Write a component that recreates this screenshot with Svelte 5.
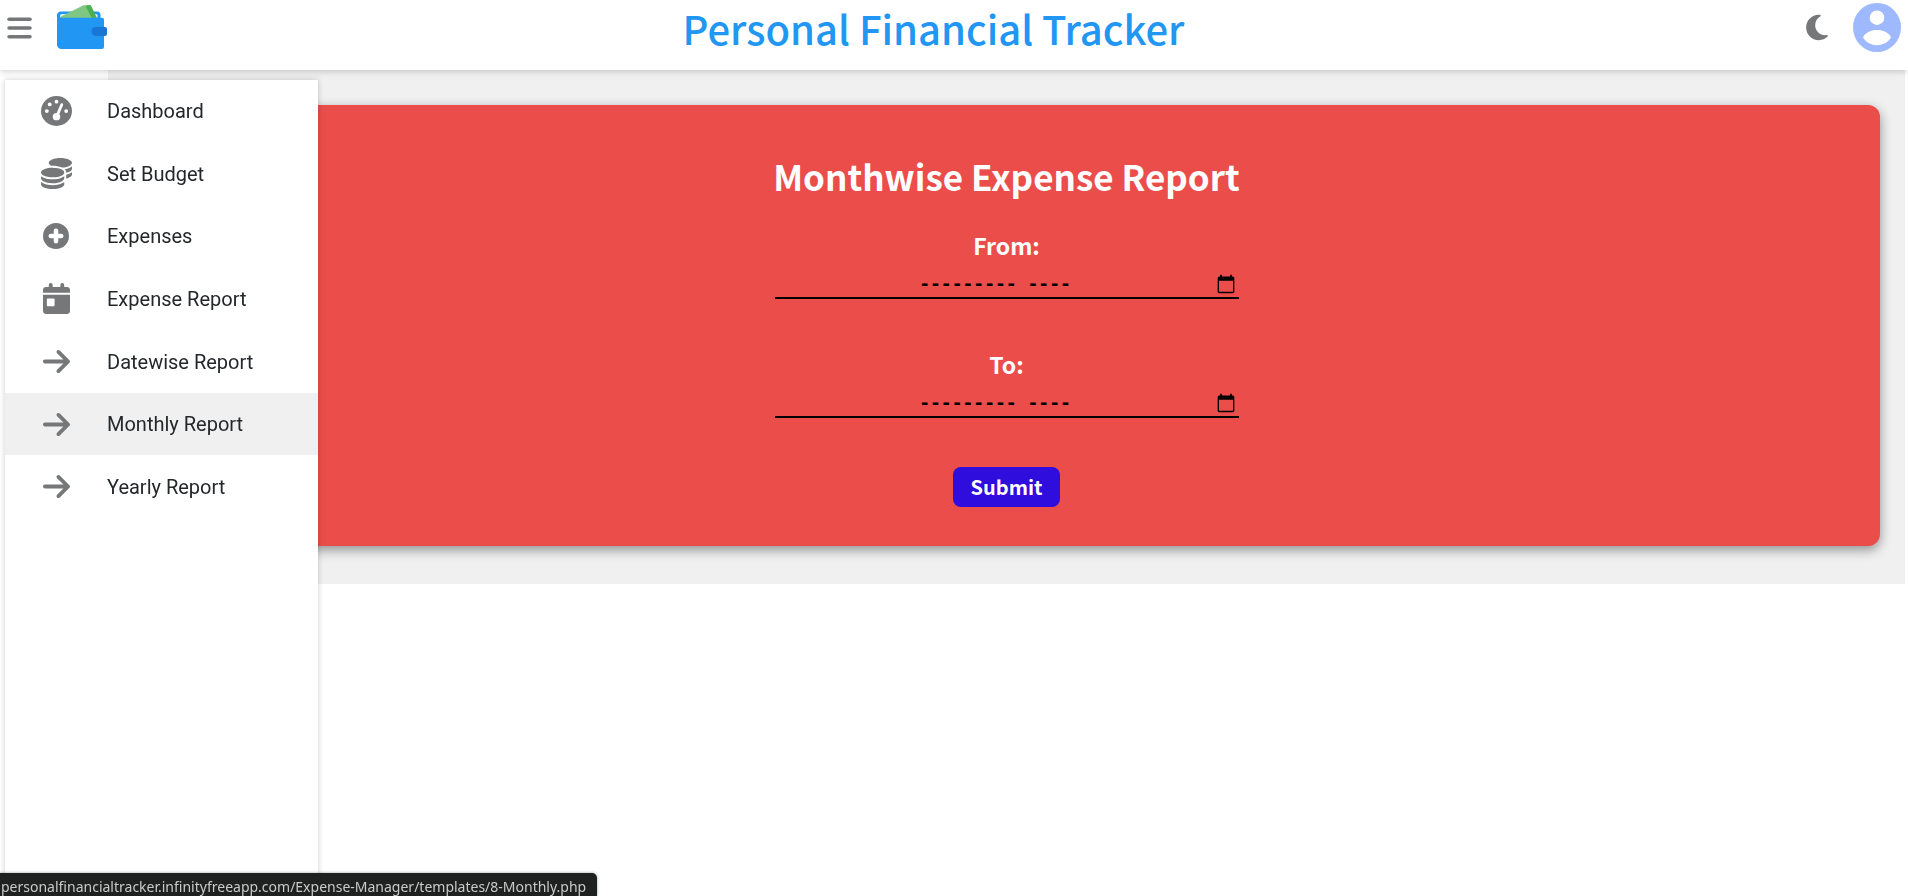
<script>
  const items = [
    { label: 'Dashboard', icon: 'gauge' },
    { label: 'Set Budget', icon: 'coins' },
    { label: 'Expenses', icon: 'plus' },
    { label: 'Expense Report', icon: 'calendar' },
    { label: 'Datewise Report', icon: 'arrow' },
    { label: 'Monthly Report', icon: 'arrow', active: true },
    { label: 'Yearly Report', icon: 'arrow' }
  ];

  const fields = [
    { id: 'from', label: 'From:' },
    { id: 'to', label: 'To:' }
  ];
</script>

<div class="page">
  <header>
    <div class="side">
      <button class="icon-button" aria-label="Menu">
        <svg width="25" height="28" viewBox="0 0 448 512" fill="currentColor">
          <rect x="0" y="64" width="448" height="64" rx="32" />
          <rect x="0" y="224" width="448" height="64" rx="32" />
          <rect x="0" y="384" width="448" height="64" rx="32" />
        </svg>
      </button>
      <a class="logo" href="#home" aria-label="Home">
        <svg width="50" height="45" viewBox="0 0 50 45">
          <path d="M4 6.500h36a3.500 3.500 0 0 1 3.500 3.500v4H0v-4a4 4 0 0 1 4-3.500z" fill="#2196f3" />
          <path d="M3 13v-2a2 2 0 0 1 2-2h34a1.500 1.500 0 0 1 1.500 1.500V13z" fill="#e3f2fd" />
          <path d="M28 .500 32.500 0a1.500 1.500 0 0 1 1.600.8L40 13h-8z" fill="#4caf50" />
          <path d="M3 12 26 .400a2 2 0 0 1 2.700.9L34.600 13H3z" fill="#81c784" />
          <path d="M0 9.500 3 12.700h42a2 2 0 0 1 2 2V42a2 2 0 0 1-2 2H4.500A4.500 4.500 0 0 1 0 39.500z" fill="#2196f3" />
          <path d="M39 22h9a2 2 0 0 1 2 2v5a2 2 0 0 1-2 2h-9a4.500 4.500 0 0 1 0-9z" fill="#1976d2" />
        </svg>
      </a>
    </div>
    <div class="brand">Personal Financial Tracker</div>
    <div class="side end">
      <button class="icon-button" aria-label="Dark mode">
        <svg width="22" height="29" viewBox="0 0 384 512" fill="currentColor">
          <path d="M223.500 32C100 32 0 132.300 0 256S100 480 223.500 480c60.600 0 115.500-24.200 155.800-63.400c5-4.900 6.300-12.500 3.100-18.700s-10.100-9.700-17-8.500c-9.800 1.700-19.800 2.600-30.100 2.600c-96.900 0-175.500-78.800-175.500-176c0-65.800 36-123.100 89.300-153.300c6.100-3.500 9.200-10.500 7.700-17.300s-7.300-11.900-14.300-12.500c-6.300-.5-12.600-.8-19-.8z" />
        </svg>
      </button>
      <button class="icon-button" aria-label="Account">
        <svg width="48" height="49" viewBox="0 0 48 49">
          <ellipse cx="24" cy="24.500" rx="24" ry="24.500" fill="#9fb9ff" />
          <circle cx="24" cy="14.700" r="7.300" fill="#fff" />
          <path d="M10 34.500C12 29.500 18 27 24 27s12 2.500 14 7.500C35 39.500 29.500 42.200 24 42.200S13 39.500 10 34.500z" fill="#fff" />
        </svg>
      </button>
    </div>
  </header>

  <div class="body">
    <div class="rail"></div>
    <main>
      <form class="card" onsubmit={(e) => e.preventDefault()}>
        <h1>Monthwise Expense Report</h1>
        {#each fields as field}
          <div class="field">
            <label for={field.id}>{field.label}</label>
            <div class="control">
              <input id={field.id} type="text" placeholder="--------- ----" />
              <button class="picker" type="button" aria-label="Show month picker">
                <svg width="20" height="20" viewBox="0 0 24 24">
                  <path d="M20 3h-1V1h-2v2H7V1H5v2H4c-1.100 0-2 .9-2 2v16c0 1.100.9 2 2 2h16c1.100 0 2-.9 2-2V5c0-1.100-.9-2-2-2zm.4 18.400H3.600V8h16.800v13.400z" />
                </svg>
              </button>
            </div>
          </div>
        {/each}
        <button class="submit" type="submit">Submit</button>
      </form>
    </main>
  </div>

  <nav>
    <ul>
      {#each items as item}
        <li>
          <a href="#report" class:active={item.active}>
            <span class="icon">
              {#if item.icon === 'gauge'}
                <svg width="31" height="30" viewBox="0 0 512 512" preserveAspectRatio="none">
                  <circle cx="256" cy="256" r="256" fill="currentColor" />
                  <g fill="#fff">
                    <circle cx="256" cy="96" r="32" />
                    <circle cx="144" cy="144" r="32" />
                    <circle cx="96" cy="256" r="32" />
                    <circle cx="416" cy="256" r="32" />
                    <circle cx="256" cy="352" r="62" />
                  </g>
                  <path d="M266 335 344 146" stroke="#fff" stroke-width="46" stroke-linecap="round" />
                </svg>
              {:else if item.icon === 'coins'}
                <svg width="31" height="31" viewBox="0 0 512 512" fill="currentColor">
                  <path d="M512 80c0 18-14.300 34.600-38.400 48c-29.100 16.100-72.500 27.500-122.300 30.900c-3.700-1.800-7.400-3.500-11.300-5C300.600 137.400 248.200 128 192 128c-8.300 0-16.400 .2-24.500 .6l-1.100-.6C142.300 114.600 128 98 128 80c0-44.200 86-80 192-80S512 35.800 512 80zM160.700 161.100c10.200-.7 20.700-1.100 31.300-1.100c62.200 0 117.400 12.300 152.500 31.400C369.300 204.900 384 221.700 384 240c0 4-.7 7.900-2.100 11.700c-4.600 13.200-17 25.300-35 35.500c-35 19.600-91.500 32.700-154.900 32.700c-59.600 0-112.900-11.300-148.200-29.100c-1.900-.9-3.700-1.900-5.500-2.900C14.300 274.600 0 258 0 240c0-34.800 53.400-64.500 128-75.400c10.500-1.500 21.400-2.700 32.700-3.500zM416 240c0-21.900-10.600-39.900-24.100-53.400c28.300-4.400 54.200-11.400 76.200-20.500c16.300-6.800 31.500-15.200 43.900-25.500V176c0 19.300-16.500 37.100-43.800 50.900c-14.600 7.400-32.400 13.700-52.400 18.500c.1-1.800 .2-3.500 .2-5.300zm-32 96c0 18-14.300 34.600-38.400 48c-1.800 1-3.600 1.900-5.500 2.900C304.900 404.700 251.600 416 192 416c-62.800 0-118.600-12.600-153.600-32C14.300 370.600 0 354 0 336V300.600c12.500 10.300 27.600 18.700 43.900 25.500C83.400 342.600 135.800 352 192 352s108.600-9.400 148.100-25.900c7.800-3.200 15.300-6.900 22.400-10.900c6.100-3.400 11.800-7.200 17.200-11.200c1.500-1.100 2.900-2.300 4.300-3.400V336zm32 0V278.100c19-4.200 36.500-9.500 52.100-16c16.300-6.800 31.500-15.200 43.900-25.500V272c0 10.500-5 21-14.900 30.900c-16.300 16.300-45 29.700-81.300 38.400c.1-1.700 .2-3.500 .2-5.300zM192 448c56.200 0 108.600-9.400 148.100-25.900c16.300-6.800 31.500-15.200 43.900-25.500V432c0 44.200-86 80-192 80S0 476.200 0 432V396.600c12.500 10.300 27.600 18.700 43.900 25.500C83.400 438.600 135.800 448 192 448z" />
                </svg>
              {:else if item.icon === 'plus'}
                <svg width="26" height="26" viewBox="0 0 26 26">
                  <circle cx="13" cy="13" r="13" fill="currentColor" />
                  <path d="M13 7.800v10.400M7.800 13h10.400" stroke="#fff" stroke-width="4.600" stroke-linecap="round" />
                </svg>
              {:else if item.icon === 'calendar'}
                <svg width="27" height="31" viewBox="0 0 448 512" fill="currentColor">
                  <path d="M128 0c17.700 0 32 14.300 32 32V64H288V32c0-17.700 14.300-32 32-32s32 14.300 32 32V64h48c26.500 0 48 21.500 48 48v48H0V112C0 85.500 21.500 64 48 64H96V32c0-17.700 14.300-32 32-32zM0 192H448V464c0 26.500-21.500 48-48 48H48c-26.500 0-48-21.500-48-48V192zm80 64c-8.800 0-16 7.200-16 16v96c0 8.800 7.200 16 16 16h96c8.800 0 16-7.200 16-16V272c0-8.800-7.200-16-16-16H80z" />
                </svg>
              {:else}
                <svg width="27" height="31" viewBox="0 0 448 512" fill="currentColor">
                  <path d="M438.600 278.600c12.500-12.500 12.500-32.800 0-45.300l-160-160c-12.500-12.500-32.800-12.500-45.300 0s-12.500 32.800 0 45.300L338.800 224 32 224c-17.700 0-32 14.300-32 32s14.300 32 32 32l306.700 0L233.400 393.400c-12.500 12.500-12.500 32.800 0 45.300s32.800 12.500 45.300 0l160-160z" />
                </svg>
              {/if}
            </span>
            <span>{item.label}</span>
          </a>
        </li>
      {/each}
    </ul>
  </nav>

  <div class="status">personalfinancialtracker.infinityfreeapp.com/Expense-Manager/templates/8-Monthly.php</div>
</div>

<style>
  .page {
    min-height: 100vh;
    background: #fff;
    font-family: 'Noto Sans CJK JP', sans-serif;
  }
  header {
    position: relative;
    z-index: 1;
    display: flex;
    align-items: flex-start;
    height: 70px;
    box-sizing: border-box;
    padding: 3px 7px 0;
    background: #fff;
    box-shadow: 0 2px 6px rgba(0, 0, 0, 0.16);
  }
  .side {
    flex: 1;
    display: flex;
    align-items: center;
    gap: 25px;
    height: 49px;
  }
  .end {
    justify-content: flex-end;
  }
  .icon-button {
    display: flex;
    padding: 0;
    border: 0;
    background: none;
    color: #757779;
  }
  .logo {
    display: flex;
  }
  .brand {
    padding-right: 41px;
    color: #2196f3;
    font-size: 40px;
    font-weight: 500;
    line-height: 50px;
  }
  .body {
    display: flex;
    padding-right: 3px;
  }
  .rail {
    width: 108px;
    background: #fff;
  }
  main {
    flex: 1;
    padding: 35px 25px 38px;
    background: #f0f0f0;
  }
  .card {
    display: flex;
    flex-direction: column;
    align-items: center;
    padding: 40px 40px 39px;
    border-radius: 12px;
    background: #eb4d4b;
    color: #fff;
    box-shadow: 0 4px 12px rgba(0, 0, 0, 0.4);
  }
  h1 {
    margin: 0 0 22px;
    font-size: 35px;
    font-weight: 700;
    line-height: 62px;
  }
  .field {
    display: flex;
    flex-direction: column;
    align-items: center;
    width: 464px;
    max-width: 100%;
    margin-bottom: 49px;
  }
  label {
    font-size: 23px;
    font-weight: 700;
    line-height: 32px;
  }
  .control {
    display: flex;
    align-items: center;
    width: 100%;
    height: 38px;
    box-sizing: border-box;
    padding: 10px 3px 0 0;
    border-bottom: 2px solid #000;
  }
  input {
    flex: 1;
    min-width: 0;
    padding: 0 0 2px;
    border: 0;
    background: transparent;
    color: #000;
    font-family: 'DejaVu Sans Mono', monospace;
    font-size: 18px;
    font-weight: 700;
    text-align: center;
  }
  input::placeholder {
    color: #000;
    opacity: 1;
  }
  .picker {
    display: flex;
    padding: 0;
    border: 0;
    background: none;
  }
  .submit {
    height: 40px;
    padding: 0 18px;
    border: 0;
    border-radius: 8px;
    background: #2f0ddd;
    color: #fff;
    font-family: inherit;
    font-size: 20px;
    font-weight: 700;
    line-height: 40px;
  }
  nav {
    position: fixed;
    z-index: 2;
    top: 80px;
    bottom: 0;
    left: 5px;
    width: 313px;
    background: #fff;
    box-shadow: 0 0 6px rgba(0, 0, 0, 0.2);
    font-family: Roboto, sans-serif;
    font-size: 20px;
  }
  ul {
    display: grid;
    grid-auto-rows: 1fr;
    height: 438px;
    margin: 0;
    padding: 0;
    list-style: none;
  }
  a {
    color: #25282b;
    text-decoration: none;
  }
  li a {
    display: flex;
    align-items: center;
    height: 100%;
  }
  .active {
    background: #f0f0f0;
  }
  .icon {
    display: flex;
    justify-content: center;
    width: 102px;
    color: #757779;
  }
  .status {
    position: fixed;
    z-index: 3;
    bottom: 0;
    left: 0;
    height: 23px;
    padding: 0 11px 0 1px;
    overflow: hidden;
    border-radius: 0 5px 0 0;
    background: #1f2120;
    color: #c8cacb;
    font-family: 'Noto Sans', sans-serif;
    font-size: 14px;
    line-height: 28px;
    white-space: nowrap;
    box-shadow: 0 0 3px rgba(0, 0, 0, 0.4);
  }
</style>
